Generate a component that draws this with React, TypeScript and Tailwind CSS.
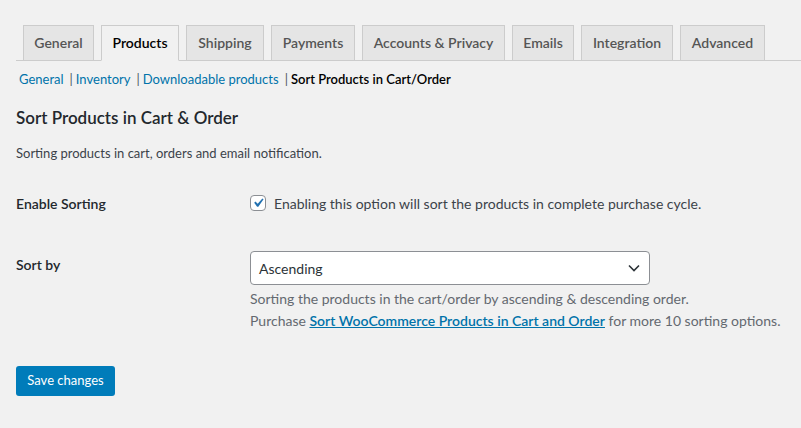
import React from 'react';

// ─────────────────────────────────────────────
// Data
// ─────────────────────────────────────────────
const TABS = [
  { label: 'General', w: 'w-[71px]' },
  { label: 'Products', w: 'w-[78px]', active: true },
  { label: 'Shipping', w: 'w-[78px]' },
  { label: 'Payments', w: 'w-[84px]' },
  { label: 'Accounts & Privacy', w: 'w-[143px]' },
  { label: 'Emails', w: 'w-[62px]' },
  { label: 'Integration', w: 'w-[92px]' },
  { label: 'Advanced', w: 'w-[85px]' },
];

const SUB_LINKS = ['General', 'Inventory', 'Downloadable products'];

// ─────────────────────────────────────────────
// Small pieces
// ─────────────────────────────────────────────
const Checkbox = () => (
  <span className="w-4 h-4 rounded-[4px] border border-[#8c8f94] bg-white flex items-center justify-center shrink-0">
    <svg viewBox="0 0 20 20" className="w-[20px] h-[20px] -m-[2px]">
      <path d="M14.83 4.89l1.34.94-5.81 8.38H9.02L5.78 9.67l1.34-1.25 2.57 2.4z" fill="#2271b1" />
    </svg>
  </span>
);

const Chevron = () => (
  <svg viewBox="0 0 12 8" className="w-[12px] h-[8px]">
    <path d="M1 1.5l5 5 5-5" fill="none" stroke="#2c3338" strokeWidth="1.6" />
  </svg>
);

// ─────────────────────────────────────────────
// Page
// ─────────────────────────────────────────────
export default function App() {
  return (
    <div className="min-h-screen bg-[#f1f1f1] pl-4 font-['Lato',sans-serif] text-[#3c434a] text-[13px]">
      {/* ── Tabs ── */}
      <nav className="pt-[25px] border-b border-[#cccccc] flex gap-[7px] pl-[7px]">
        {TABS.map((t) => (
          <div
            key={t.label}
            className={`${t.w} h-[36px] -mb-px border border-[#cccccc] flex items-center justify-center pb-[1px] text-[14px] font-semibold ${
              t.active
                ? 'bg-[#f1f1f1] border-b-[#f1f1f1] text-black'
                : 'bg-[#e5e5e5] text-[#555555]'
            }`}
          >
            {t.label}
          </div>
        ))}
      </nav>

      {/* ── Sub sections ── */}
      <div className="mt-[5px] leading-[26px] flex pl-[3px]">
        {SUB_LINKS.map((l, i) => (
          <span key={l} className="flex">
            {i > 0 && <span className="text-[#50575e] mr-[3px]">|</span>}
            <a className="text-[#0073aa] mr-[6px]">{l}</a>
          </span>
        ))}
        <span className="text-[#50575e] mr-[3px]">|</span>
        <span className="font-semibold text-black">Sort Products in Cart/Order</span>
      </div>

      {/* ── Heading ── */}
      <h2 className="mt-[14px] leading-[24px] text-[17px] font-semibold text-[#23282d]">
        Sort Products in Cart &amp; Order
      </h2>
      <p className="mt-[13px] leading-[20px]">Sorting products in cart, orders and email notification.</p>

      {/* ── Enable sorting ── */}
      <div className="mt-[28px] flex items-center h-[24px]">
        <div className="w-[234px] text-[14px] font-semibold text-[#23282d]">Enable Sorting</div>
        <label className="flex items-center gap-[8px] text-[14px]">
          <Checkbox />
          Enabling this option will sort the products in complete purchase cycle.
        </label>
      </div>

      {/* ── Sort by ── */}
      <div className="mt-[36px] flex">
        <div className="w-[234px] text-[14px] font-semibold text-[#23282d] leading-[24px] pt-[2px]">Sort by</div>
        <div>
          <div className="w-[400px] h-[34px] bg-white border border-[#8c8f94] rounded-[4px] flex items-center justify-between pl-[8px] pr-[9px] text-[14px] text-[#2c3338]">
            <span>Ascending</span>
            <Chevron />
          </div>
          <p className="mt-[3px] leading-[22px] text-[14px] text-[#646970]">
            Sorting the products in the cart/order by ascending &amp; descending order.
          </p>
          <p className="leading-[22px] text-[14px] text-[#646970]">
            Purchase{' '}
            <a className="font-semibold text-[#0073aa] underline">Sort WooCommerce Products in Cart and Order</a>{' '}
            for more 10 sorting options.
          </p>
        </div>
      </div>

      {/* ── Submit ── */}
      <button className="mt-[34px] w-[99px] h-[30px] rounded-[3px] bg-[#007cba] text-white text-[13px]">
        Save changes
      </button>
    </div>
  );
}
